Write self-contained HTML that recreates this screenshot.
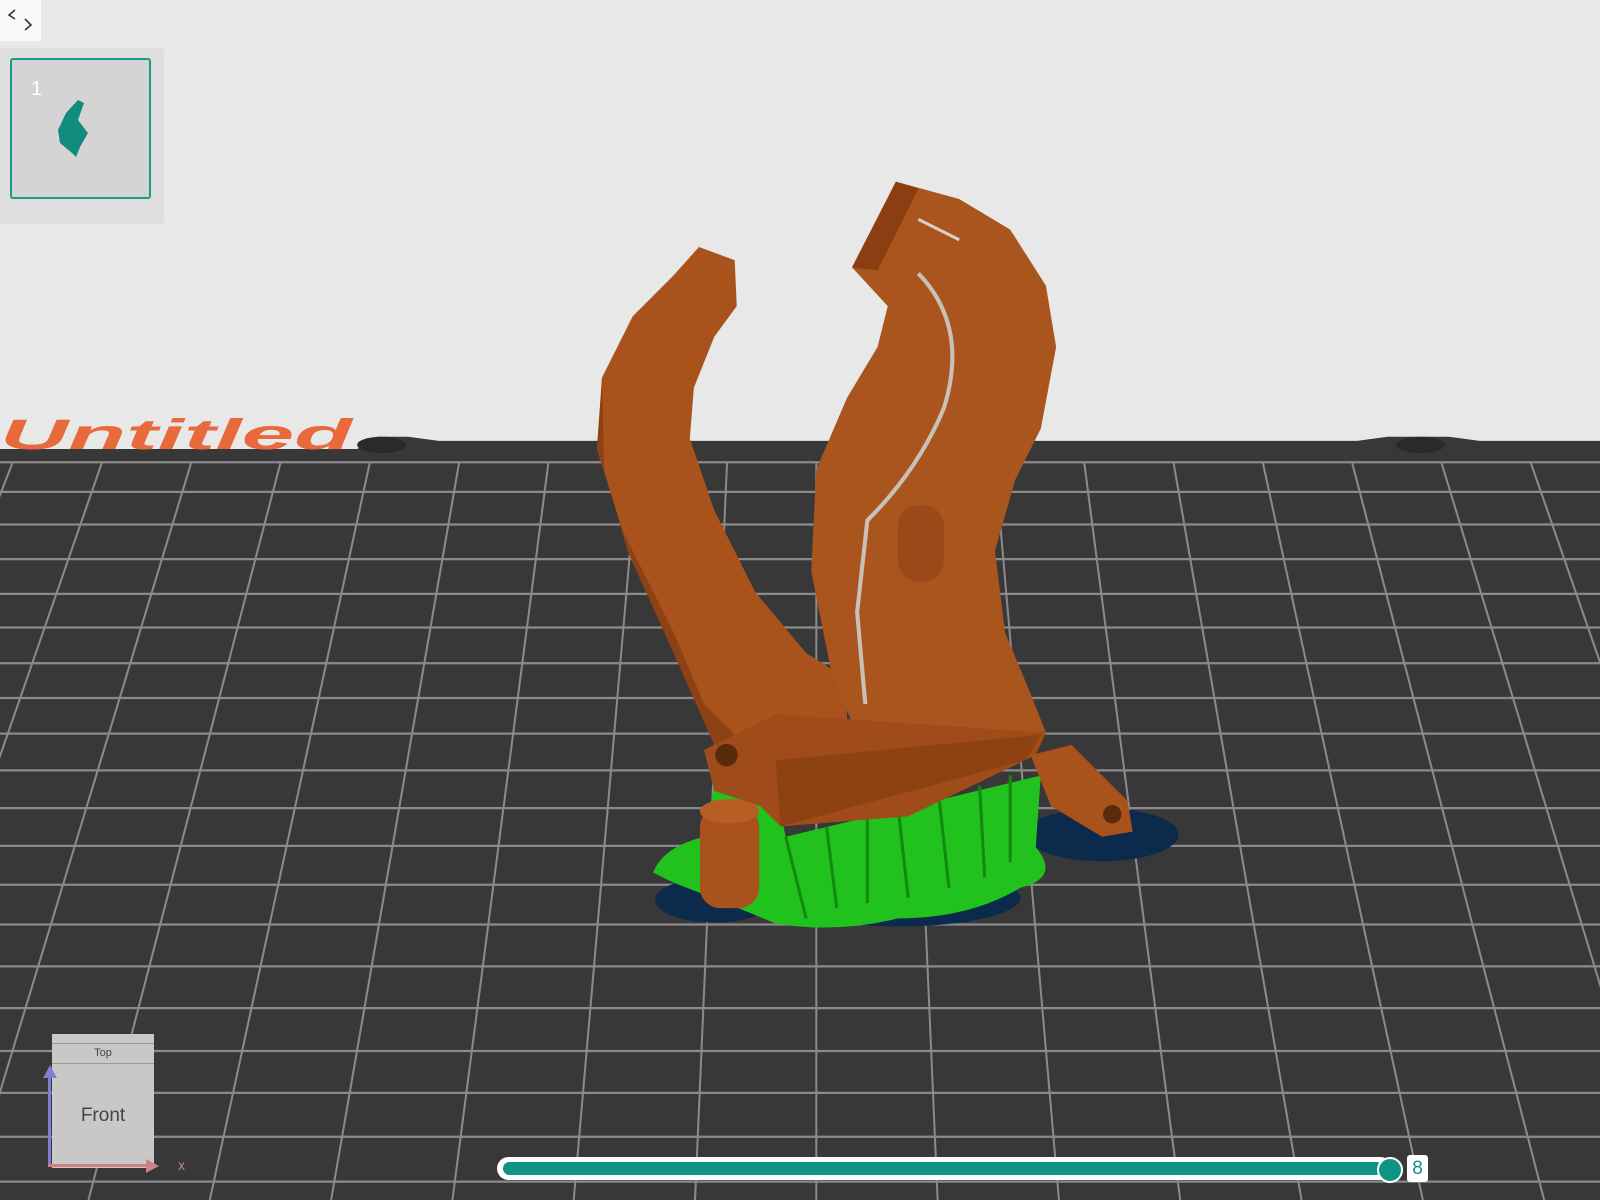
<!DOCTYPE html>
<html><head><meta charset="utf-8"><style>
html,body{margin:0;padding:0;width:1600px;height:1200px;overflow:hidden;background:#e8e8e8;font-family:"Liberation Sans",sans-serif}
svg{position:absolute;left:0;top:0}
</style></head><body>
<svg width="1600" height="1200" viewBox="0 0 1568 1176" preserveAspectRatio="none">
<rect width="1568" height="1176" fill="#e8e8e8"/>
<path d="M0 452 L0 440 L350 440 L370 428 L400 428 L430 432 L1330 432 L1360 428 L1420 428 L1450 432 L1568 432 L1568 1176 L0 1176 Z" fill="#383838"/>
<ellipse cx="374" cy="436" rx="24" ry="8" fill="#2a2a2a"/>
<ellipse cx="1392" cy="436" rx="24" ry="8" fill="#2a2a2a"/>
<text x="0" y="440" font-family="Liberation Sans" font-weight="bold" font-style="italic" font-size="42" fill="#e8693a" textLength="345" lengthAdjust="spacingAndGlyphs">Untitled</text>
<g stroke="#8a8a8a" stroke-width="2.2">
<line x1="0" y1="453" x2="1568" y2="453"/><line x1="0" y1="482" x2="1568" y2="482"/>
<line x1="0" y1="514" x2="1568" y2="514"/><line x1="0" y1="548" x2="1568" y2="548"/>
<line x1="0" y1="582" x2="1568" y2="582"/><line x1="0" y1="615" x2="1568" y2="615"/>
<line x1="0" y1="650" x2="1568" y2="650"/><line x1="0" y1="684" x2="1568" y2="684"/>
<line x1="0" y1="719" x2="1568" y2="719"/><line x1="0" y1="755" x2="1568" y2="755"/>
<line x1="0" y1="792" x2="1568" y2="792"/><line x1="0" y1="829" x2="1568" y2="829"/>
<line x1="0" y1="867" x2="1568" y2="867"/><line x1="0" y1="906" x2="1568" y2="906"/>
<line x1="0" y1="947" x2="1568" y2="947"/><line x1="0" y1="988" x2="1568" y2="988"/>
<line x1="0" y1="1030" x2="1568" y2="1030"/><line x1="0" y1="1071" x2="1568" y2="1071"/>
<line x1="0" y1="1114" x2="1568" y2="1114"/><line x1="0" y1="1158" x2="1568" y2="1158"/>
</g>
<g id="v" stroke="#8a8a8a" stroke-width="2"></g>
</svg>
<script>
var g=document.getElementById('v');var ns='http://www.w3.org/2000/svg';
for(var k=-12;k<12;k++){var xt=800+87.5*k;var vx=800,vy=-1563;
var t2=(1176-vy)/(453-vy);
var l=document.createElementNS(ns,'line');
l.setAttribute('x1',xt);l.setAttribute('y1',453);
l.setAttribute('x2',vx+(xt-vx)*t2);l.setAttribute('y2',1176);g.appendChild(l);}
</script>
<svg width="1600" height="1200" viewBox="0 0 1568 1176" preserveAspectRatio="none">
<ellipse cx="700" cy="882" rx="58" ry="22" fill="#0c2a4c"/>
<ellipse cx="1080" cy="818" rx="75" ry="26" fill="#0c2a4c"/>
<ellipse cx="880" cy="880" rx="120" ry="28" fill="#0c2a4c"/>
<path d="M640 855 Q650 830 690 820 L700 770 L760 770 L770 820 L1020 760 L1015 830 Q1040 860 1000 870 Q950 900 880 900 Q820 915 760 905 Q700 880 660 865 Z" fill="#22c21e"/>
<g stroke="#128a10" stroke-width="3" fill="none">
<path d="M770 820 L790 900 M810 810 L820 890 M850 800 L850 885 M880 790 L890 880 M920 780 L930 870 M960 770 L965 860 M990 760 L990 845"/>
</g>
<path d="M685 242 L720 255 L722 300 L700 330 L680 380 L676 430 L700 500 L740 580 L790 640 L830 665 L830 720 L720 720 L690 690 L660 620 L610 520 L585 440 L590 370 L620 310 L660 270 Z" fill="#a9521c"/>
<path d="M590 370 L585 440 L610 520 L660 620 L690 690 L720 720 L700 730 L660 640 L615 540 L592 460 Z" fill="#8e4214"/>
<path d="M835 262 L878 178 L940 195 L990 225 L1025 280 L1035 340 L1020 420 L995 470 L975 540 L985 620 L1010 680 L1025 718 L900 760 L840 720 L815 660 L795 560 L800 460 L830 390 L860 340 L870 300 Z" fill="#ab551e"/>
<path d="M835 262 L878 178 L900 185 L860 265 Z" fill="#8a3e12"/>
<path d="M900 268 Q950 320 925 400 Q900 460 850 510 L840 600 L848 690" stroke="#c9c0b8" stroke-width="4" fill="none"/>
<path d="M900 215 L940 235" stroke="#d8d0c8" stroke-width="3"/>
<rect x="880" y="495" width="45" height="75" rx="20" fill="#9a4a18"/>
<path d="M690 735 L760 700 L1025 718 L1015 740 L890 800 L765 810 L745 790 L700 775 Z" fill="#a04c1a"/>
<path d="M760 745 L1020 720 L1005 745 L765 810 Z" fill="#8e4214"/>
<path d="M1010 740 L1050 730 L1105 785 L1110 815 L1080 820 L1030 790 Z" fill="#a9521c"/>
<circle cx="1090" cy="798" r="9" fill="#5a2a0c"/>
<circle cx="712" cy="740" r="11" fill="#5a2a0c"/>
<rect x="686" y="790" width="58" height="100" rx="20" fill="#a9521c"/>
<ellipse cx="715" cy="795" rx="29" ry="12" fill="#b85e24"/>
</svg>
<div style="position:absolute;left:0;top:0;width:41px;height:41px;background:#fafafa"></div>
<svg style="left:6px;top:6px" width="28" height="28" viewBox="0 0 28 28"><path d="M9 4 L3 9 L9 13 M19 13 L25 19 L19 24" stroke="#333" stroke-width="1.6" fill="none"/></svg>
<div style="position:absolute;left:0;top:48px;width:164px;height:176px;background:#dedede;border-radius:4px"></div>
<div style="position:absolute;left:10px;top:58px;width:137px;height:137px;background:#d4d4d4;border:2px solid #1a9a8a;border-radius:3px"></div>
<div style="position:absolute;left:31px;top:78px;color:#fff;font-size:20px">1</div>
<svg style="left:50px;top:95px" width="50" height="70" viewBox="0 0 50 70"><path d="M28 5 L34 8 L28 25 L38 38 L30 52 L26 62 L22 58 L10 48 L8 35 L16 18 Z" fill="#118c7c"/></svg>
<div style="position:absolute;left:52px;top:1034px;width:102px;height:134px;background:#c8c8c8"></div>
<div style="position:absolute;left:52px;top:1043px;width:102px;height:19px;border-top:1px solid #999;border-bottom:1px solid #999;font-size:11px;color:#444;text-align:center;line-height:19px">Top</div>
<div style="position:absolute;left:52px;top:1105px;width:102px;text-align:center;font-size:19px;color:#444">Front</div>
<div style="position:absolute;left:48px;top:1077px;width:3px;height:90px;background:#7f7fd0"></div>
<div style="position:absolute;left:43px;top:1065px;width:0;height:0;border-left:7px solid transparent;border-right:7px solid transparent;border-bottom:13px solid #7f7fd0"></div>
<div style="position:absolute;left:48px;top:1164px;width:100px;height:3px;background:#d08080"></div>
<div style="position:absolute;left:146px;top:1159px;border-top:7px solid transparent;border-bottom:7px solid transparent;border-left:13px solid #d08080"></div>
<div style="position:absolute;left:178px;top:1157px;color:#d08080;font-size:14px">x</div>
<div style="position:absolute;left:497px;top:1157px;width:895px;height:23px;background:#fff;border-radius:12px"></div>
<div style="position:absolute;left:503px;top:1162px;width:880px;height:13px;background:#0e9484;border-radius:7px"></div>
<div style="position:absolute;left:1377px;top:1157px;width:22px;height:22px;background:#0e9484;border:2px solid #fff;border-radius:50%"></div>
<div style="position:absolute;left:1407px;top:1155px;width:21px;height:27px;background:#fff;border-radius:3px;color:#0e9484;font-size:19px;text-align:center;line-height:27px">8</div>
</body></html>
